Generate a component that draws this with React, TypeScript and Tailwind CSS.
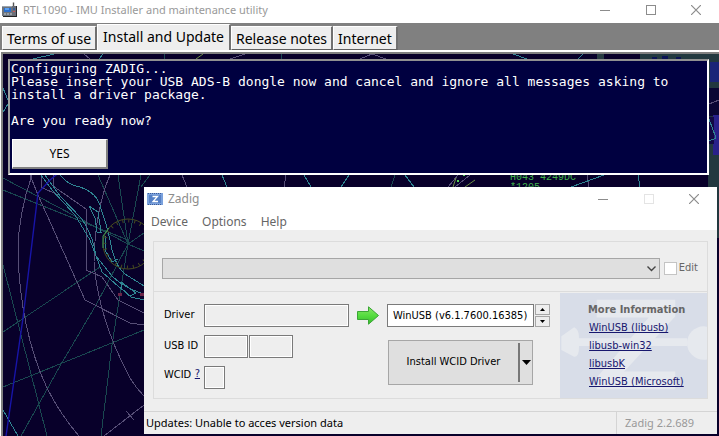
import React, { useState } from 'react';

const tabs = ['Terms of use', 'Install and Update', 'Release notes', 'Internet'];

const links = ['WinUSB (libusb)', 'libusb-win32', 'libusbK', 'WinUSB (Microsoft)'];

const RadioIcon: React.FC = () => (
  <svg viewBox="0 0 16 16" className="w-4 h-4 shrink-0" aria-hidden="true">
    <path d="M11.5 5V0.5" stroke="#555" strokeWidth="1.4" />
    <rect x="0" y="4" width="12" height="10" fill="#6d747d" />
    <rect x="0" y="4" width="12" height="1" fill="#9aa3ad" />
    <rect x="2" y="6" width="7" height="4" fill="#2a6fd0" />
    <rect x="3" y="6" width="4" height="2" fill="#5ba0f0" />
    <path d="M2 12H4M5 12H7M8 12H10" stroke="#c8ced6" />
    <rect x="10" y="4" width="5" height="11" fill="#6b6f78" />
    <rect x="14" y="4" width="1" height="11" fill="#25262b" />
    <rect x="11" y="6" width="2" height="2" fill="#3b5f9a" />
    <rect x="11" y="9" width="2" height="1" fill="#c55" />
    <rect x="1" y="14" width="13" height="1" fill="#222" />
  </svg>
);

const ZadigIcon: React.FC = () => (
  <svg viewBox="0 0 16 14" className="w-4 h-[14px] shrink-0" aria-hidden="true">
    <rect x="0" y="1" width="16" height="12" fill="#7ba1dc" />
    <path d="M1 1.5H15M1 12.5H15" stroke="#3c5a96" strokeWidth="1" strokeDasharray="1 1" />
    <rect x="2" y="3" width="12" height="8" fill="#5580c6" />
    <path d="M5.5 4.5H10.5L6 9.5H11" fill="none" stroke="#fff" strokeWidth="1.3" />
  </svg>
);

const WindowButtons: React.FC<{ maxColor: string }> = ({ maxColor }) => (
  <div className="flex text-[#8c8c8c]">
    <button type="button" aria-label="Minimize" className="w-[46px] h-5 flex items-center justify-center">
      <svg viewBox="0 0 10 10" className="w-[10px] h-[10px]"><path d="M0 5.5H10" stroke="currentColor" /></svg>
    </button>
    <button type="button" aria-label="Maximize" className="w-[45px] h-5 flex items-center justify-center">
      <svg viewBox="0 0 10 10" className="w-[10px] h-[10px]"><rect x="0.5" y="0.5" width="9" height="9" fill="none" stroke={maxColor} /></svg>
    </button>
    <button type="button" aria-label="Close" className="w-[46px] h-5 flex items-center justify-center">
      <svg viewBox="0 0 10 10" className="w-[10px] h-[10px]"><path d="M0 0L10 10M10 0L0 10" stroke="currentColor" strokeWidth="1.2" /></svg>
    </button>
  </div>
);

const RadarMap: React.FC = () => (
  <svg viewBox="3 54 716 382" preserveAspectRatio="xMinYMin slice" className="absolute inset-0 w-full h-full" aria-hidden="true">
    <rect x="3" y="54" width="716" height="382" fill="#08002a" />
    <rect x="640" y="54" width="79" height="8" fill="#22393f" />
    <path d="M652 57h5v3h-5zM662 56h6v4h-6zM676 57h5v3h-5z" fill="#0b1355" />
    <rect x="597" y="54" width="7" height="5" fill="#273b42" />
    <rect x="708" y="54" width="11" height="184" fill="#22383f" />
    <rect x="710" y="62" width="9" height="20" fill="#1b2478" />
    <rect x="709" y="88" width="10" height="28" fill="#0a0634" />
    <rect x="713" y="115" width="6" height="40" fill="#29218a" />
    <rect x="709" y="117" width="5" height="27" fill="#120a44" />
    <g fill="none" stroke="#194850" shapeRendering="crispEdges">
      <path d="M3 178L128 244L144 251M3 190L128 240M118 175L128 244M141 175L128 244L144 233M98 175L128 244" />
      <path d="M128 244L96 305L60 366L21 436M3 332L100 267M3 387L144 330M3 265L47 436M128 244L120 294L112 345L101 436" />
      <path d="M164 54V59M281 54V59M395 175L391 187M150 175L141 187" />
    </g>
    <g fill="none" stroke="#564e76" shapeRendering="crispEdges">
      <path d="M32 175Q18 215 18 252Q20 330 47 388Q60 414 79 436" />
      <path d="M110 175Q95 210 94 262Q98 318 130 378Q136 388 144 396" />
      <path d="M30 175L38 195L85 300L130 323L144 325" />
      <path d="M53 175V186L86 209V270L102 277L118 300L144 313" />
      <path d="M41 175V187L58 195M104 436L144 405M126 411L134 420" />
      <path d="M182 175L187 187M286 175L284 187M458 175L448 187M470 175L455 187M587 175L589 187" />
      <path d="M84 54L90 59M230 59L245 54M360 59L372 54L386 59" />
      <path d="M709 104L719 100" />
    </g>
    <g fill="none" stroke="#2f8592" shapeRendering="crispEdges">
      <path d="M41 175L52 190L75 215L90 240L102 272L118 286L131 297L144 300" />
      <path d="M60 175Q68 185 80 187Q98 193 101 209Q106 222 110 240Q114 265 125 274L144 286" />
      <path d="M45 175L60 196L82 219Q94 238 96 256L112 276Q124 288 144 294" />
      <path d="M89 206L95 218L97 232H101L98 212L89 206M105 236V250L112 262L118 259M121 282L136 293L130 296L121 288Z" />
      <path d="M3 410L18 436M222 175L227 187M304 175L311 187M349 175L341 187M405 175L414 187" />
      <path d="M33 59L54 54M99 59L103 54M578 59L583 54M513 54L527 59M638 175L640 187M571 187L604 175" />
      <path d="M709 119L716 138L709 141M3 88L8 100M3 112L8 104" />
    </g>
    <path d="M196 59L203 54M453 187L456 178M465 187L475 180" stroke="#6b8f45" />
    <g fill="none" stroke="#464a20">
      <circle cx="128" cy="244" r="25" />
      <circle cx="128" cy="244" r="23" strokeWidth="3" strokeDasharray="1 5" />
    </g>
    <path d="M62 170L50 180L38 193L23 318L6 436" fill="none" stroke="#1814a8" strokeWidth="1.4" />
    <path d="M103 248V236L109 228" fill="none" stroke="#3fa35c" />
    <path d="M118 293h4v3h-4zM140 293h4v3h-4z" fill="#6b2548" />
    <path d="M457 180h2v2h-2zM463 175h2v1h-2z" fill="#55d05a" />
    <text x="510" y="180" fill="#3fb24a" className="font-['Liberation_Mono',monospace] text-[10px]">H043 4249DC</text>
    <text x="510" y="190" fill="#3fb24a" className="font-['Liberation_Mono',monospace] text-[10px]">*1205</text>
  </svg>
);

const ZadigWindow: React.FC = () => {
  const [edit, setEdit] = useState(false);
  const field = 'h-[23px] border border-[#7a7a7a] bg-[#eee] shadow-[inset_0_0_0_1px_#fff]';

  return (
    <section aria-label="Zadig" className="absolute left-[141px] right-[2px] top-[133px] bg-[#eee] text-xs text-black">
      <header className="bg-white h-[43px]">
        <div className="h-6 flex items-center justify-between pl-[3px]">
          <div className="flex items-center gap-[5px] text-[#8c8c8c]"><ZadigIcon />Zadig</div>
          <WindowButtons maxColor="#e4e4e4" />
        </div>
        <nav className="flex gap-[14px] pl-[7px] leading-[22px] text-[#666]">
          {['Device', 'Options', 'Help'].map(m => <button key={m} type="button">{m}</button>)}
        </nav>
      </header>

      <div className="mx-[9px] mt-[11px] border border-[#dcdcdc] font-['DejaVu_Sans_Condensed','Noto_Sans',sans-serif]">
        <div className="h-[49px] flex items-center gap-1 pl-2 pr-[9px] pt-1">
          <div className="relative flex-1">
            <select aria-label="USB device" className="block w-full h-[21px] appearance-none bg-[#dfdfdf] border border-[#a6a6a6]" />
            <svg viewBox="0 0 9 6" className="absolute right-1 top-2 w-[9px] h-[6px] pointer-events-none"><path d="M0.5 0.5L4.5 4.5L8.5 0.5" fill="none" stroke="#444" strokeWidth="1.4" /></svg>
          </div>
          <label className="flex items-center gap-[2px] text-[#666] text-[11px]">
            <input type="checkbox" checked={edit} onChange={e => setEdit(e.target.checked)} className="appearance-none w-[13px] h-[13px] bg-white border border-[#c4c4c4] checked:bg-[#888]" />
            Edit
          </label>
        </div>

        <div className="flex border-t border-[#dcdcdc] text-[11px]">
          <div className="w-[225px] pt-3 pl-[10px] flex flex-col gap-2">
            <div className="flex items-center">
              <label htmlFor="driver" className="w-10">Driver</label>
              <input id="driver" readOnly className={`${field} w-[147px]`} />
              <svg viewBox="0 0 22 19" className="w-[22px] h-[19px] ml-2 shrink-0" aria-hidden="true">
                <defs>
                  <linearGradient id="arrow" x1="0" y1="0" x2="0" y2="1">
                    <stop offset="0" stopColor="#8be36a" />
                    <stop offset="0.5" stopColor="#55dd3f" />
                    <stop offset="1" stopColor="#36b92c" />
                  </linearGradient>
                </defs>
                <path d="M0.5 5.5H11.5V0.8L21.5 9.5L11.5 18.2V13.5H0.5Z" fill="url(#arrow)" stroke="#3aa535" />
              </svg>
            </div>
            <div className="flex items-center">
              <label htmlFor="vid" className="w-10 shrink-0">USB ID</label>
              <input id="vid" readOnly className={`${field} w-11`} />
              <input aria-label="Product ID" readOnly className={`${field} w-11 ml-px`} />
            </div>
            <div className="flex items-center">
              <div className="w-10 flex justify-between pr-1">
                <label htmlFor="wcid">WCID</label>
                <a href="#" aria-label="About WCID" className="pb-2 leading-3 text-[#17176e] underline">?</a>
              </div>
              <input id="wcid" readOnly className={`${field} w-[21px]`} />
            </div>
          </div>

          <div className="flex-1 pt-3 pl-2 pb-[13px]">
            <div className="flex gap-px">
              <input aria-label="Target driver" readOnly value="WinUSB (v6.1.7600.16385)" className="w-[147px] h-[23px] pl-[5px] bg-white border border-[#7a7a7a]" />
              <div className="flex flex-col justify-between">
                <button type="button" aria-label="Next" className="w-[15px] h-[11px] border border-[#a6a6a6] flex items-center justify-center">
                  <svg viewBox="0 0 5 3" className="w-[5px] h-[3px]"><path d="M0 3L2.5 0L5 3Z" /></svg>
                </button>
                <button type="button" aria-label="Previous" className="w-[15px] h-[11px] border border-[#a6a6a6] flex items-center justify-center">
                  <svg viewBox="0 0 5 3" className="w-[5px] h-[3px]"><path d="M0 0L2.5 3L5 0Z" /></svg>
                </button>
              </div>
            </div>
            <div className="mt-[13px] ml-px w-[145px] h-[45px] flex items-center bg-[#dfdfdf] border border-[#a6a6a6]">
              <button type="button" className="flex-1 text-center">Install WCID Driver</button>
              <button type="button" aria-label="More actions" className="w-[14px] h-[39px] border-l-2 border-[#777] flex items-center justify-center">
                <svg viewBox="0 0 9 5" className="w-[9px] h-[5px]"><path d="M0 0H9L4.5 5Z" /></svg>
              </button>
            </div>
          </div>

          <aside className="relative w-[147px] mt-px bg-[#d8dde8]">
            <svg viewBox="0 0 147 107" className="absolute inset-0 w-full h-full" aria-hidden="true">
              <g fill="#e6e9ee">
                <path d="M36 7H116V24L64 80H116V98H36V86L89 25H36Z" />
                <path d="M0 44L13 35Q18 37 18 46H128V54H18Q18 66 13 65L0 58Z" />
                <circle cx="145" cy="51" r="17" />
              </g>
            </svg>
            <div className="relative pt-2 pl-7">
              <h2 className="font-bold text-[11px] leading-[18px] text-[#666]">More Information</h2>
              {links.map(l => <a key={l} href="#" className="block w-max leading-[18px] pl-px text-[#17176e] underline">{l}</a>)}
            </div>
          </aside>
        </div>
      </div>

      <footer className="mt-3 border-t border-[#d4d4d4] flex leading-[22px] text-[11px]">
        <span className="flex-1 pl-[2px]">Updates: Unable to acces version data</span>
        <span className="w-[101px] pl-2 border-l border-[#d4d4d4] text-[#999]">Zadig 2.2.689</span>
      </footer>
    </section>
  );
};

const App: React.FC = () => {
  const [active, setActive] = useState(1);

  return (
    <div className="min-h-screen flex flex-col bg-white font-['Noto_Sans','Open_Sans',sans-serif]">
      <header className="h-[23px] flex items-center justify-between pl-[2px] pb-[3px]">
        <h1 className="flex items-center gap-[5px] text-[11px] text-[#999]"><RadioIcon />RTL1090 - IMU Installer and maintenance utility</h1>
        <WindowButtons maxColor="#8c8c8c" />
      </header>

      <nav role="tablist" className="h-[29px] flex items-end bg-[#808080] border-b-2 border-b-white pl-[2px] text-[14px] text-black">
        {tabs.map((t, i) => (
          <button key={t} type="button" role="tab" aria-selected={i === active} onClick={() => setActive(i)}
            className={`whitespace-nowrap bg-[#eee] border-t border-l border-t-white border-l-white border-r-2 border-r-[#707070] ${i === active ? 'h-[26px] px-[5px] pb-[2px]' : 'h-6 px-1 border-b border-b-[#606060]'}`}>
            {t}
          </button>
        ))}
      </nav>

      <main className="relative flex-1 min-h-96 ml-px border-t-2 border-t-[#808080] border-l-2 border-l-[#808080]">
        <RadarMap />
        <section aria-label="Console" className="relative ml-[5px] mr-[10px] mt-[5px] h-[116px] px-px pt-px bg-[#000040] border-2 border-t-[#909090] border-l-[#a0a0a0] border-b-white border-r-white">
          <p className="whitespace-pre font-['DejaVu_Sans_Mono',monospace] text-[13px] leading-[13px] text-white">
            {'Configuring ZADIG...\nPlease insert your USB ADS-B dongle now and cancel and ignore all messages asking to\ninstall a driver package.\n\nAre you ready now?'}
          </p>
          <button type="button" className="mt-3 ml-px w-24 h-[30px] bg-[#eee] border border-t-white border-l-white border-b-2 border-r-2 border-b-[#808080] border-r-[#808080] text-xs text-black">YES</button>
        </section>
        <ZadigWindow />
      </main>
    </div>
  );
};

export default App;
